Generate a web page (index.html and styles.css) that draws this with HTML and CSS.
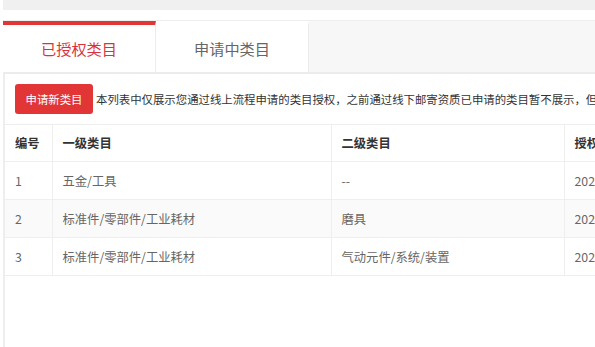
FILE: index.html
```html
<!DOCTYPE html>
<html lang="zh-CN">
<head>
<meta charset="utf-8">
<title>类目管理</title>
<link rel="stylesheet" href="styles.css">
</head>
<body>
<div class="topbar"></div>
<div class="panel">
  <div class="tabs">
    <div class="tab active">已授权类目</div>
    <div class="tab">申请中类目</div>
    <div class="tab-fill"></div>
  </div>
  <div class="toolbar">
    <button class="btn-apply">申请新类目</button>
    <span class="notice">本列表中仅展示您通过线上流程申请的类目授权，之前通过线下邮寄资质已申请的类目暂不展示，但不影响您正常发布商品。</span>
  </div>
  <table class="grid">
    <colgroup>
      <col class="c-no">
      <col class="c-first">
      <col class="c-second">
      <col class="c-time">
    </colgroup>
    <thead>
      <tr><th>编号</th><th>一级类目</th><th>二级类目</th><th>授权时间</th></tr>
    </thead>
    <tbody>
      <tr><td>1</td><td>五金/工具</td><td>--</td><td>2021-06-18 10:24:36</td></tr>
      <tr class="alt"><td>2</td><td>标准件/零部件/工业耗材</td><td>磨具</td><td>2021-06-18 10:24:36</td></tr>
      <tr><td>3</td><td>标准件/零部件/工业耗材</td><td>气动元件/系统/装置</td><td>2021-06-18 10:24:36</td></tr>
    </tbody>
  </table>
</div>
</body>
</html>
```
FILE: styles.css
```css
html, body {
  margin: 0;
  padding: 0;
  background: #fff;
  overflow: hidden;
}
body {
  width: 595px;
  height: 347px;
  padding-left: 3px;
  box-sizing: border-box;
  font-family: "Noto Sans CJK SC", "Noto Sans", sans-serif;
  color: #333;
}
.topbar {
  height: 10px;
  background: #f0f0f0;
}
.panel {
  margin-top: 10px;
  width: 900px;
  height: 400px;
  border-left: 2px solid #eeeeee;
  box-sizing: border-box;
  background: #fff;
}
.tabs {
  display: flex;
  height: 54px;
  box-sizing: border-box;
  background: #f7f7f7;
  border-top: 1px solid #eeeeee;
  border-bottom: 2px solid #ececec;
  margin-left: -2px;
}
.tab {
  width: 153px;
  box-sizing: border-box;
  background: #fff;
  border-top: 4px solid #fff;
  border-right: 1px solid #ececec;
  display: flex;
  align-items: center;
  justify-content: center;
  font-size: 15.2px;
  color: #666;
  padding-bottom: 2px;
}
.tab.active {
  border-top-color: #e23636;
  color: #d8333a;
}
.tab-fill {
  flex: 1;
}
.toolbar {
  display: flex;
  align-items: center;
  padding: 10px 0 10px 10px;
  white-space: nowrap;
}
.btn-apply {
  width: 78px;
  height: 30px;
  border: none;
  border-radius: 3px;
  background: #e23636;
  color: #fff;
  font-family: inherit;
  font-size: 11.4px;
  padding: 0;
  margin-right: 3px;
}
.notice {
  font-size: 11.4px;
  color: #333;
}
.grid {
  border-collapse: collapse;
  table-layout: fixed;
  width: 750px;
  font-size: 12.3px;
}
.c-no { width: 47px; }
.c-first { width: 279px; }
.c-second { width: 233px; }
.c-time { width: 191px; }
.grid th, .grid td {
  height: 37px;
  padding: 0 0 0 10px;
  text-align: left;
  border: 1px solid #efefef;
  white-space: nowrap;
  overflow: hidden;
}
.grid th:first-child, .grid td:first-child {
  border-left: none;
}
.grid th {
  height: 36px;
  font-weight: bold;
  color: #333;
}
.grid td {
  color: #666;
}
.grid tr.alt td {
  background: #fafafa;
}
```
